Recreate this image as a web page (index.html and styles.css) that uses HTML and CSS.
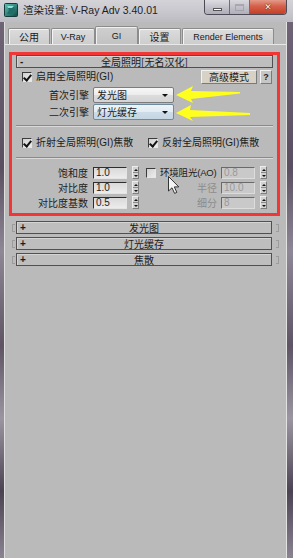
FILE: index.html
```html
<!DOCTYPE html>
<html lang="zh">
<head>
<meta charset="utf-8">
<title>渲染设置</title>
<link rel="stylesheet" href="styles.css">
</head>
<body>
<div class="window">
  <div class="titlebar">
    <svg class="appicon" width="14" height="14" viewBox="0 0 14 14">
      <defs>
        <linearGradient id="ig" x1="0" y1="0" x2="1" y2="1">
          <stop offset="0" stop-color="#5fc4b8"/>
          <stop offset="1" stop-color="#0c4a46"/>
        </linearGradient>
      </defs>
      <rect x="0.5" y="0.5" width="13" height="13" rx="1" fill="url(#ig)" stroke="#123b39"/>
      <path d="M3 3 L10 3 L11 7 L8 11 L3 11 L5 7 Z" fill="#1f6e68"/>
      <path d="M3 3 L10 3 L8 5 L4 5 Z" fill="#8fe0d4"/>
    </svg>
    <span class="title">渲染设置: V-Ray Adv 3.40.01</span>
    <div class="caption">
      <span class="cbtn cmin"><span class="minbar"></span></span>
      <span class="cbtn cmax"><span class="maxbox"></span></span>
      <span class="cbtn cclose">✕</span>
    </div>
  </div>

  <div class="client">
    <div class="tabs">
      <div class="tab t1">公用</div>
      <div class="tab t2">V-Ray</div>
      <div class="tab t3 active">GI</div>
      <div class="tab t4">设置</div>
      <div class="tab t5">Render Elements</div>
    </div>

    <div class="tabpanel">
      <div class="highlight">
        <div class="rhead open"><span class="sign">-</span><span class="rtitle">全局照明[无名汉化]</span></div>

        <div class="row row-enable">
          <span class="chk on"></span>
          <span class="lbl">启用全局照明(GI)</span>
          <span class="btn adv">高级模式</span>
          <span class="btn help">?</span>
        </div>

        <div class="engines">
          <span class="elabel">首次引擎</span>
          <div class="dropdown"><span>发光图</span><span class="caret"></span></div>
          <span class="elabel">二次引擎</span>
          <div class="dropdown hover"><span>灯光缓存</span><span class="caret"></span></div>
        </div>

        <div class="sep"></div>

        <div class="row row-caustics">
          <div class="citem"><span class="chk on"></span><span class="lbl">折射全局照明(GI)焦散</span></div>
          <div class="citem"><span class="chk on"></span><span class="lbl">反射全局照明(GI)焦散</span></div>
        </div>

        <div class="sep sep2"></div>

        <div class="params">
          <div class="pgrid left">
            <span class="plabel">饱和度</span><span class="field">1.0</span><span class="spin"><i class="up"></i><i class="dn"></i></span>
            <span class="plabel">对比度</span><span class="field">1.0</span><span class="spin"><i class="up"></i><i class="dn"></i></span>
            <span class="plabel">对比度基数</span><span class="field">0.5</span><span class="spin"><i class="up"></i><i class="dn"></i></span>
          </div>
          <div class="pgrid right">
            <span class="aolabel"><span class="chk"></span><span>环境阻光(AO)</span></span><span class="field dis">0.8</span><span class="spin"><i class="up"></i><i class="dn"></i></span>
            <span class="plabel dim">半径</span><span class="field dis">10.0</span><span class="spin"><i class="up"></i><i class="dn"></i></span>
            <span class="plabel dim">细分</span><span class="field dis">8</span><span class="spin"><i class="up"></i><i class="dn"></i></span>
          </div>
        </div>
      </div>

      <div class="rollouts">
        <div class="rrow"><span class="brk l"></span><div class="rhead"><span class="sign">+</span><span class="rtitle">发光图</span></div><span class="brk r"></span></div>
        <div class="rrow"><span class="brk l"></span><div class="rhead"><span class="sign">+</span><span class="rtitle">灯光缓存</span></div><span class="brk r"></span></div>
        <div class="rrow"><span class="brk l"></span><div class="rhead"><span class="sign">+</span><span class="rtitle">焦散</span></div><span class="brk r"></span></div>
      </div>
    </div>
  </div>

  <svg class="overlay" width="293" height="558" viewBox="0 0 293 558">
    <polygon points="176,95 193,86 191,91 240,92 240,93.5 191,99 193,103" fill="#ffff1e"/>
    <polygon points="176,113 191,105 190,110 250,113 250,115 190,117 193,121" fill="#ffff1e"/>
    <path d="M168.5 176.5 L168.5 191 L172 187.8 L174.6 193.4 L176.8 192.4 L174.3 186.9 L178.8 186.9 Z" fill="#f4f4f4" stroke="#222" stroke-width="0.9" stroke-linejoin="round"/>
  </svg>
</div>
</body>
</html>
```

FILE: styles.css
```css
* { box-sizing: border-box; margin: 0; padding: 0; }

html, body {
  width: 293px;
  height: 558px;
  overflow: hidden;
}

body {
  font-family: "Liberation Sans", "Noto Sans CJK SC", sans-serif;
  font-size: 10px;
  line-height: 12px;
  color: #1c1c1c;
  background: #6a6070;
}

.window {
  position: relative;
  width: 293px;
  height: 558px;
  display: flex;
  flex-direction: column;
  background: linear-gradient(180deg, #c9c8ce 0, #c9c8ce 22px, #6f6475 22px, #5a4f60 30%, #8e8796 45%, #5e5464 62%, #9b95a1 75%, #4c4352 88%, #8a8391 100%);
}

/* ---------- title bar ---------- */
.titlebar {
  height: 22px;
  flex: none;
  display: flex;
  align-items: center;
  padding-left: 4px;
  background: linear-gradient(180deg, #d4d3d8 0, #c7c6cc 60%, #bdbcc3 100%);
}

.appicon { flex: none; margin-top: -2px; }

.title {
  margin-left: 5px;
  margin-top: -3px;
  font-family: "Liberation Sans", "Noto Sans CJK SC", sans-serif;
  font-size: 10.5px;
  color: #1e1e24;
  white-space: nowrap;
}

.caption {
  margin-left: auto;
  margin-right: 6px;
  align-self: flex-start;
  display: flex;
  height: 15px;
  border: 1px solid #4b4a55;
  border-top: none;
  border-radius: 0 0 4px 4px;
  overflow: hidden;
}

.cbtn {
  display: flex;
  align-items: center;
  justify-content: center;
  height: 14px;
}

.cmin {
  width: 25px;
  background: linear-gradient(180deg, #dcdce2 0, #c4c3cb 50%, #aeadb8 100%);
  border-right: 1px solid #6f6e7a;
}
.minbar {
  width: 9px;
  height: 3px;
  margin-top: 5px;
  background: #fff;
  border: 1px solid #555;
}

.cmax {
  width: 20px;
  background: linear-gradient(180deg, #d8d8de 0, #c3c2ca 50%, #b0afba 100%);
  border-right: 1px solid #6f6e7a;
}
.maxbox {
  width: 9px;
  height: 7px;
  border: 1px solid #9a99a3;
  border-top-width: 2px;
  opacity: 0.7;
}

.cclose {
  width: 36px;
  background: linear-gradient(180deg, #e59a88 0, #d4604a 45%, #c43f28 100%);
  color: #fff;
  font-family: "DejaVu Sans", sans-serif;
  font-weight: bold;
  font-size: 9px;
  text-shadow: 0 0 1px #3a0d06, 0 0 1px #3a0d06;
}

/* ---------- client ---------- */
.client {
  flex: 1;
  display: flex;
  flex-direction: column;
  margin: 0 6px 0 4px;
  background: #bababa;
  border-left: 1px solid #dedede;
  border-right: 1px solid #e2e2e2;
}

.tabs {
  display: flex;
  align-items: flex-end;
  height: 22px;
  padding-left: 3px;
  flex: none;
}

.tab {
  height: 16px;
  margin-right: 1px;
  display: flex;
  align-items: center;
  justify-content: center;
  font-size: 9px;
  color: #1a1a1a;
  background: linear-gradient(180deg, #dcdcdc 0, #cdcdcd 100%);
  border: 1px solid #8c8c8c;
  border-bottom: none;
  box-shadow: inset 1px 1px 0 #f4f4f4;
  border-radius: 2px 2px 0 0;
}
.tab.t1 { width: 42px; font-family: "Noto Sans CJK SC", sans-serif; font-size: 10px; }
.tab.t2 { width: 44px; }
.tab.t3 { width: 43px; }
.tab.t4 { width: 43px; font-family: "Noto Sans CJK SC", sans-serif; font-size: 10px; }
.tab.t5 { width: 92px; }

.tab.active {
  height: 18px;
  margin-left: -1px;
  margin-right: 0;
  background: linear-gradient(180deg, #cfcfcf 0, #c2c2c2 100%);
  border-color: #8c8c8c;
  box-shadow: inset 1px 1px 0 #f0f0f0;
}

.tabpanel {
  flex: 1;
  border-top: 1px solid #e8e8e8;
  display: flex;
  flex-direction: column;
}

/* ---------- highlighted rollout ---------- */
.highlight {
  margin: 7px 0 0 4px;
  width: 271px;
  height: 164px;
  border: 3px solid #f23636;
  padding: 0 4px 0 4px;
  display: flex;
  flex-direction: column;
}

.rhead {
  height: 13px;
  flex: none;
  display: flex;
  align-items: center;
  position: relative;
  border: 1px solid #505050;
  box-shadow: inset 1px 1px 0 #d4d4d4;
  background: #bebebe;
  font-family: "Noto Sans CJK SC", sans-serif;
  font-size: 10px;
  line-height: 11px;
}
.rhead .sign {
  width: 10px;
  padding-left: 3px;
  font-family: "Liberation Sans", sans-serif;
  font-weight: bold;
  font-size: 10px;
}
.rhead .rtitle {
  flex: 1;
  text-align: center;
  margin-right: 10px;
  white-space: nowrap;
}

.row {
  display: flex;
  align-items: center;
}

.row-enable {
  height: 14px;
  margin-top: 2px;
  padding-left: 6px;
}

.lbl {
  margin-left: 4px;
  white-space: nowrap;
}

.chk {
  width: 10px;
  height: 10px;
  flex: none;
  position: relative;
  background: linear-gradient(135deg, #cfcfcf 0, #ededed 100%);
  border: 1px solid;
  border-color: #3c3c3c #e6e6e6 #e6e6e6 #3c3c3c;
}
.chk.on::after {
  content: "";
  position: absolute;
  left: 2px;
  top: 0px;
  width: 3px;
  height: 6px;
  border: solid #111;
  border-width: 0 2px 2px 0;
  transform: rotate(40deg);
}

.btn {
  height: 14px;
  display: flex;
  align-items: center;
  justify-content: center;
  border: 1px solid;
  border-color: #f2f2f2 #7a7a7a #7a7a7a #f2f2f2;
}
.btn.adv {
  margin-left: auto;
  width: 56px;
  background: #d8d1c5;
  font-family: "Noto Sans CJK SC", sans-serif;
  font-size: 10px;
}
.btn.help {
  width: 12px;
  margin-left: 3px;
  margin-right: 1px;
  background: #c6c6c6;
  font-weight: bold;
  font-size: 9px;
}

.engines {
  margin-top: 3px;
  display: grid;
  grid-template-columns: 73px 81px;
  column-gap: 4px;
  row-gap: 1px;
  align-items: center;
}
.elabel {
  text-align: right;
  font-family: "Noto Sans CJK SC", sans-serif;
}
.dropdown {
  height: 16px;
  display: flex;
  align-items: center;
  padding-left: 3px;
  border: 1px solid #7c7c7c;
  border-radius: 2px;
  background: linear-gradient(180deg, #f7f7f7 0, #ececec 50%, #dcdcdc 51%, #d4d4d4 100%);
  font-family: "Noto Sans CJK SC", sans-serif;
}
.dropdown.hover {
  border-color: #6c8aa0;
  background: linear-gradient(180deg, #eef4f8 0, #e2ecf2 50%, #cddde8 51%, #c4d6e2 100%);
}
.caret {
  margin-left: auto;
  margin-right: 5px;
  width: 0;
  height: 0;
  border-left: 3px solid transparent;
  border-right: 3px solid transparent;
  border-top: 3px solid #111;
}

.sep {
  height: 2px;
  margin-top: 5px;
  border-top: 1px solid #8a8a8a;
  border-bottom: 1px solid #dadada;
}

.row-caustics {
  height: 14px;
  margin-top: 9px;
  padding-left: 6px;
}
.citem {
  display: flex;
  align-items: center;
}
.citem:first-child { width: 126px; }

.sep2 { margin-top: 7px; }

.params {
  margin-top: 6px;
  display: flex;
}

.pgrid {
  display: grid;
  grid-auto-rows: 15px;
  align-items: center;
}
.pgrid.left {
  grid-template-columns: 72px 34px 7px;
  column-gap: 5px;
}
.pgrid.right {
  margin-left: 7px;
  grid-template-columns: 71px 34px 7px;
  column-gap: 4px;
}
.pgrid.right .spin { margin-left: 1px; }

.plabel {
  text-align: right;
  white-space: nowrap;
  font-family: "Noto Sans CJK SC", sans-serif;
}
.plabel.dim { color: #8c8c8c; }

.aolabel {
  display: flex;
  align-items: center;
  white-space: nowrap;
  font-size: 9.5px;
  letter-spacing: -0.2px;
}
.aolabel .chk { margin-right: 4px; }

.field {
  height: 12px;
  padding-left: 2px;
  display: flex;
  align-items: center;
  font-size: 10px;
  line-height: 10px;
  background: linear-gradient(180deg, #d9d9d9 0, #ececec 100%);
  border: 1px solid;
  border-color: #2e2e2e #e4e4e4 #e4e4e4 #2e2e2e;
}
.field.dis {
  color: #9a9a9a;
  background: #c9c9c9;
  border-color: #6a6a6a #dcdcdc #dcdcdc #6a6a6a;
}

.spin {
  width: 7px;
  height: 13px;
  display: flex;
  flex-direction: column;
  background: #d2d2d2;
  border: 1px solid;
  border-color: #ececec #7e7e7e #7e7e7e #ececec;
}
.spin i {
  flex: 1;
  display: flex;
  align-items: center;
  justify-content: center;
}
.spin i.up { border-bottom: 1px solid #8a8a8a; }
.spin i.up::after {
  content: "";
  border-left: 2px solid transparent;
  border-right: 2px solid transparent;
  border-bottom: 2px solid #111;
}
.spin i.dn::after {
  content: "";
  border-left: 2px solid transparent;
  border-right: 2px solid transparent;
  border-top: 2px solid #111;
}

/* ---------- collapsed rollouts ---------- */
.rollouts {
  margin-top: 5px;
  display: flex;
  flex-direction: column;
  gap: 3px;
}
.rrow {
  display: flex;
  align-items: center;
  padding-left: 7px;
}
.rrow .rhead { width: 256px; }
.brk {
  width: 3px;
  height: 8px;
  border: 1px solid #9c9c9c;
  flex: none;
}
.brk.l { border-right: none; margin-right: 1px; }
.brk.r { border-left: none; margin-left: 4px; }

/* ---------- annotation overlay ---------- */
.overlay {
  position: absolute;
  left: 0;
  top: 0;
  pointer-events: none;
}
```
